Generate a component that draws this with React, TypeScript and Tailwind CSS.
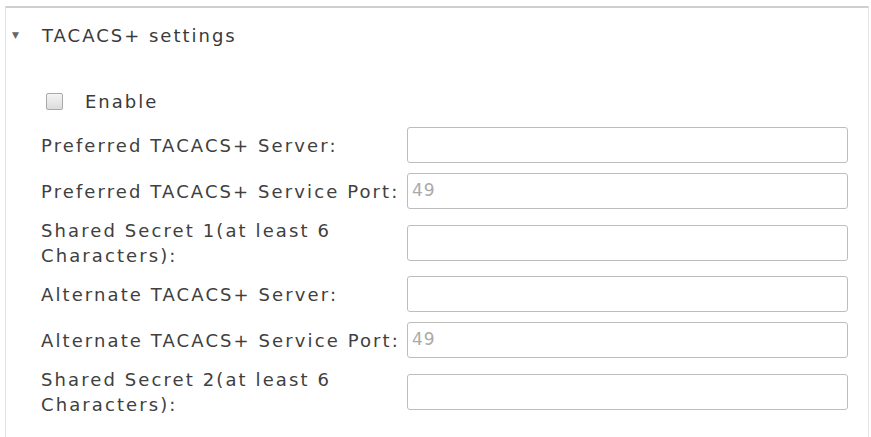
import React from 'react';

const rows: { label: string; value?: string; tall?: boolean }[] = [
  { label: 'Preferred TACACS+ Server:' },
  { label: 'Preferred TACACS+ Service Port:', value: '49' },
  { label: 'Shared Secret 1(at least 6 Characters):', tall: true },
  { label: 'Alternate TACACS+ Server:' },
  { label: 'Alternate TACACS+ Service Port:', value: '49' },
  { label: 'Shared Secret 2(at least 6 Characters):', tall: true },
];

const App: React.FC = () => {
  return (
    <div
      className="w-[871px] h-[437px] bg-white overflow-hidden pt-[6px] pl-[5px] pr-[2px]"
      style={{ fontFamily: '"DejaVu Sans", Verdana, sans-serif' }}
    >
      <div className="h-full border-t-2 border-l border-r border-t-[#cfcfcf] border-l-[#e2e2e2] border-r-[#e6e6e6]">
        {/* header */}
        <div className="flex items-center h-[54px] pl-[6px]">
          <span className="w-[30px] text-[9px] text-[#666] leading-none">▼</span>
          <span className="text-[18px] tracking-[2px] text-[#3a3a3a]">TACACS+ settings</span>
        </div>

        {/* enable */}
        <div className="flex items-center h-[35px] pl-[40px] mt-[22px]">
          <span className="w-[17px] h-[17px] border border-[#a9a9a9] rounded-[2px] bg-gradient-to-b from-[#f4f4f4] to-[#dcdcdc]" />
          <span className="ml-[22px] text-[18px] tracking-[2px] text-[#3a3a3a]">Enable</span>
        </div>

        {/* fields */}
        <div className="flex flex-col pl-[35px] mt-[3px]">
          {rows.map((r) => (
            <div
              key={r.label}
              className={`flex items-center ${r.tall ? 'h-[57px]' : 'h-[46px]'}`}
            >
              <div className="w-[366px] pr-[1px] text-[18px] tracking-[2.1px] leading-[25px] text-[#404040]">
                {r.label}
              </div>
              <div className="w-[441px] h-[36px] border border-[#bdbdbd] rounded-[3px] bg-white flex items-center px-[4px]">
                {r.value && (
                  <span className="text-[17px] tracking-[1px] text-[#aaaaaa]">{r.value}</span>
                )}
              </div>
            </div>
          ))}
        </div>
      </div>
    </div>
  );
};

export default App;
